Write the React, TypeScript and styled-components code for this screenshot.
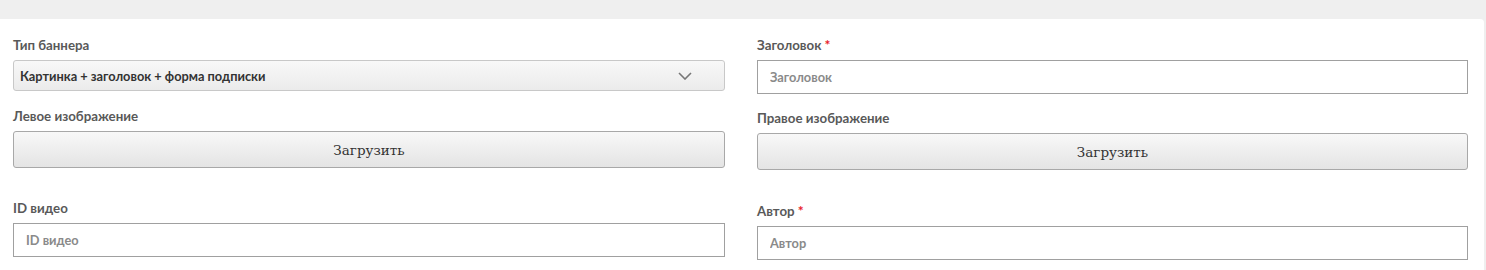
import React from 'react';
import styled, { createGlobalStyle } from 'styled-components';

const GlobalStyle = createGlobalStyle`
    html, body {
        margin: 0;
        padding: 0;
        background: #efefef;
    }
    body {
        font-family: Lato, "Open Sans", "Liberation Sans", sans-serif;
    }
`;

const Panel = styled.div`
    margin: 19px 2px 0 0;
    padding: 17px 16px 0 13px;
    height: 251px;
    box-sizing: border-box;
    background: #fff;
    border-top-right-radius: 4px;
    display: grid;
    grid-template-columns: 712px 711px;
    column-gap: 32px;
`;

const Column = styled.div`
    display: flex;
    flex-direction: column;
`;

const Group = styled.div<{ $spacing?: number }>`
    display: flex;
    flex-direction: column;
    margin-bottom: ${(p) => p.$spacing ?? 16}px;
`;

const Label = styled.label`
    font-size: 13.3px;
    font-weight: 700;
    line-height: 18px;
    color: #595959;
    margin-bottom: 6px;
`;

const Required = styled.span`
    color: #e8202a;
    margin-left: 3px;
    font-size: 14px;
`;

const SelectBox = styled.div`
    height: 31px;
    box-sizing: border-box;
    display: flex;
    align-items: center;
    justify-content: space-between;
    padding: 0 32px 0 6px;
    border: 1px solid #c8c8c8;
    border-radius: 3px;
    background: linear-gradient(#f8f8f8, #ebebeb);
    font-size: 12.8px;
    font-weight: 700;
    color: #333;
`;

const Chevron = styled.svg`
    width: 14px;
    height: 8px;
    color: #777;
`;

const TextInput = styled.input`
    height: 34px;
    box-sizing: border-box;
    padding: 0 12px;
    border: 1px solid #a0a0a0;
    border-radius: 0;
    background: #fff;
    font: 700 12.8px Lato, "Open Sans", "Liberation Sans", sans-serif;
    color: #333;
    outline: none;

    &::placeholder {
        font: 700 12.8px Lato, "Open Sans", "Liberation Sans", sans-serif;
        color: #8a8a8a;
        opacity: 1;
    }
`;

const UploadButton = styled.button`
    height: 37px;
    box-sizing: border-box;
    border: 1px solid #a8a8a8;
    border-radius: 3px;
    background: linear-gradient(#f8f8f8, #e4e4e4);
    font-family: "DejaVu Serif", "Liberation Serif", serif;
    font-size: 13.5px;
    color: #333;
    cursor: pointer;
`;

const Field: React.FC<{ label: string; required?: boolean; spacing?: number; children: React.ReactNode }> = ({
    label,
    required,
    spacing,
    children,
}) => (
    <Group $spacing={spacing}>
        <Label>
            {label}
            {required && <Required>*</Required>}
        </Label>
        {children}
    </Group>
);

export default function App() {
    return (
        <>
            <GlobalStyle />
            <Panel>
                <Column>
                    <Field label="Тип баннера">
                        <SelectBox>
                            <span>Картинка + заголовок + форма подписки</span>
                            <Chevron viewBox="0 0 14 8" fill="none">
                                <path d="M1 1l6 6 6-6" stroke="currentColor" strokeWidth="1.6" />
                            </Chevron>
                        </SelectBox>
                    </Field>
                    <Field label="Левое изображение" spacing={31}>
                        <UploadButton type="button">Загрузить</UploadButton>
                    </Field>
                    <Field label="ID видео">
                        <TextInput placeholder="ID видео" />
                    </Field>
                </Column>
                <Column>
                    <Field label="Заголовок" required spacing={15}>
                        <TextInput placeholder="Заголовок" />
                    </Field>
                    <Field label="Правое изображение" spacing={32}>
                        <UploadButton type="button">Загрузить</UploadButton>
                    </Field>
                    <Field label="Автор" required>
                        <TextInput placeholder="Автор" />
                    </Field>
                </Column>
            </Panel>
        </>
    );
}
